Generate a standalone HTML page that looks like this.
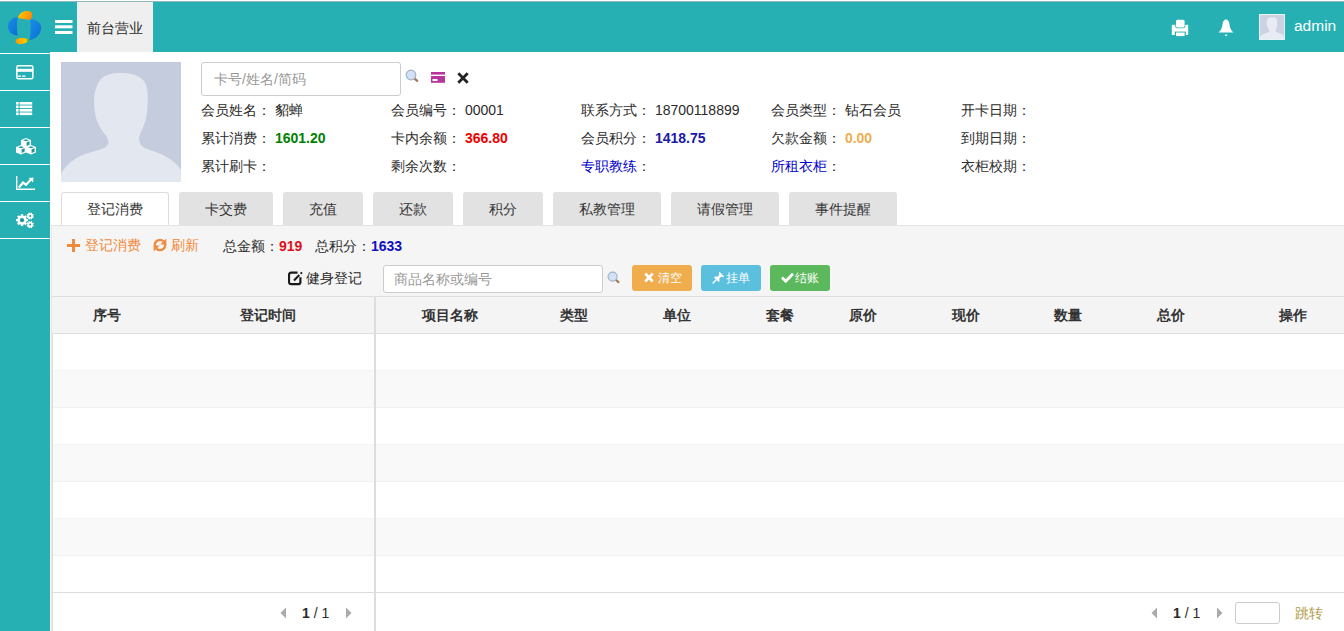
<!DOCTYPE html>
<html><head><meta charset="utf-8">
<style>
*{box-sizing:border-box;margin:0;padding:0}
html,body{width:1344px;height:631px;overflow:hidden;background:#fff;font-family:"Liberation Sans",sans-serif;font-size:14px;color:#333}
.a{position:absolute}
#hdr{left:0;top:1px;width:1344px;height:51px;background:#26b0b3;border-top:1px solid #8fb9b9}
#side{left:0;top:52px;width:50px;height:579px;background:#26b0b3}
.si{position:absolute;left:0;width:50px;height:37px;border-top:1px solid #fff}
#tabtop{left:77px;top:2px;width:76px;height:50px;background:#efefef}
.lbl{position:absolute;white-space:nowrap;font-size:14px;color:#2b2b2b;line-height:16px}
.tab{position:absolute;top:192px;height:33px;background:#e2e2e2;border-radius:3px 3px 0 0;text-align:center;line-height:34px;font-size:14px;color:#333}
.tab.act{background:#fff;border:1px solid #ddd;border-bottom:none;line-height:33px}
.th{position:absolute;top:297px;font-weight:bold;font-size:14px;line-height:37px;color:#333;white-space:nowrap}
.btn{position:absolute;top:265px;width:60px;height:26px;border-radius:3px;color:#fff;font-size:13px;line-height:26px;text-align:center}
</style></head><body>
<div id="hdr" class="a"></div>
<div class="a" style="left:0;top:52px;width:50px;height:1px;background:#229fa2"></div>
<svg class="a" style="left:4px;top:6px" width="42" height="42" viewBox="0 0 42 42">
  <defs>
    <linearGradient id="lf" x1="0" y1="0" x2="1" y2="0.3"><stop offset="0" stop-color="#ffd400"/><stop offset="1" stop-color="#ff8a00"/></linearGradient>
    <linearGradient id="lf2" x1="0" y1="0" x2="1" y2="0"><stop offset="0" stop-color="#ff9a00"/><stop offset="0.7" stop-color="#ffc800"/><stop offset="1" stop-color="#2c9a3a"/></linearGradient>
    <linearGradient id="bl" x1="0" y1="0" x2="1" y2="1"><stop offset="0" stop-color="#1a8fe8"/><stop offset="1" stop-color="#0a6fd0"/></linearGradient>
  </defs>
  <path d="M13.6 11 C7.5 12 4 15.5 4 20.5 C4 25.5 7.5 29 13.6 29.6 C12.6 24 12.6 16.5 13.6 11 Z" fill="url(#bl)"/>
  <path d="M26 13 C33 14 37.2 17 37.2 21.5 C37.2 28 32.5 33 25.3 34.2 C27 27.5 27 19.5 26 13 Z" fill="url(#bl)"/>
  <path d="M14 11.8 C15 7.5 19 5 23 5 C26 5 28.2 6 28.2 8.6 C28.2 11 27.3 13.3 26.3 13.8 C22 13.6 17 12.8 14 11.8 Z" fill="url(#lf)"/>
  <path d="M11.7 34.6 C12 32.6 15 32 18 32 C21 32 24 32.8 25.9 33.8 C24 36.6 20 38.2 16 38.2 C13 38.2 11.5 36.6 11.7 34.6 Z" fill="url(#lf2)"/>
</svg>
<svg class="a" style="left:55px;top:20px" width="18" height="14" viewBox="0 0 18 14" fill="#fff">
  <rect x="0" y="0" width="17.5" height="3"/><rect x="0" y="5.3" width="17.5" height="3"/><rect x="0" y="11" width="17.5" height="3"/>
</svg>
<div id="tabtop" class="a"></div>
<div class="lbl" style="left:87px;top:20px">前台营业</div>
<div id="side" class="a">
  <div class="si" style="top:1px"></div>
  <div class="si" style="top:38px"></div>
  <div class="si" style="top:75px"></div>
  <div class="si" style="top:112px"></div>
  <div class="si" style="top:149px"></div>
  <div class="si" style="top:186px"></div>
</div>
<!-- sidebar icons -->
<svg class="a" style="left:16px;top:65px" width="18" height="15" viewBox="0 0 18 15">
  <rect x="0.8" y="0.8" width="16" height="13" rx="1.5" fill="none" stroke="#fff" stroke-width="1.6"/>
  <rect x="1" y="3.8" width="16" height="3" fill="#fff"/>
  <rect x="2" y="10.5" width="3" height="1.3" fill="#fff"/><rect x="6" y="10.5" width="3.5" height="1.3" fill="#fff"/>
</svg>
<svg class="a" style="left:16px;top:102px" width="17" height="14" viewBox="0 0 17 14" fill="#fff">
  <rect x="0" y="0" width="2.6" height="2.6"/><rect x="3.6" y="0" width="12.6" height="2.6"/>
  <rect x="0" y="3.5" width="2.6" height="2.6"/><rect x="3.6" y="3.5" width="12.6" height="2.6"/>
  <rect x="0" y="7" width="2.6" height="2.6"/><rect x="3.6" y="7" width="12.6" height="2.6"/>
  <rect x="0" y="10.5" width="2.6" height="2.6"/><rect x="3.6" y="10.5" width="12.6" height="2.6"/>
</svg>
<svg class="a" style="left:16px;top:138px" width="21" height="17" viewBox="0 0 21 17">
  <g fill="#fff">
    <path d="M10 0 L15 2 L15 7.5 L10 9.5 L5 7.5 L5 2 Z"/>
    <path d="M5 7 L10 9 L10 14.5 L5 16.5 L0 14.5 L0 9 Z"/>
    <path d="M15 7 L20 9 L20 14.5 L15 16.5 L10 14.5 L10 9 Z"/>
  </g>
  <g fill="#229a98">
    <path d="M7 2.2 L10 1.2 L13 2.2 L10 3.3 Z"/><path d="M10.6 4.3 L13.6 3.2 L13.6 6.8 L10.6 8 Z"/>
    <path d="M2 9.2 L5 8.2 L8 9.2 L5 10.3 Z"/><path d="M5.6 11.3 L8.6 10.2 L8.6 13.8 L5.6 15 Z"/>
    <path d="M12 9.2 L15 8.2 L18 9.2 L15 10.3 Z"/><path d="M15.6 11.3 L18.6 10.2 L18.6 13.8 L15.6 15 Z"/>
  </g>
</svg>
<svg class="a" style="left:16px;top:176px" width="20" height="15" viewBox="0 0 20 15">
  <path d="M0.7 0 V13.3 H19" fill="none" stroke="#fff" stroke-width="1.4"/>
  <path d="M3 11.5 L7 6.5 L10 8.7 L15 3.6" fill="none" stroke="#fff" stroke-width="2.2"/>
  <path d="M12.5 2 L17.5 1.5 L17 6.5 Z" fill="#fff"/>
</svg>
<svg class="a" style="left:15px;top:212px" width="21" height="17" viewBox="0 0 21 17">
  <g fill="#fff">
    <circle cx="7" cy="8.2" r="4.7"/>
    <path d="M7.00 8.20 L12.90 8.20 M7.00 8.20 L11.17 12.37 M7.00 8.20 L7.00 14.10 M7.00 8.20 L2.83 12.37 M7.00 8.20 L1.10 8.20 M7.00 8.20 L2.83 4.03 M7.00 8.20 L7.00 2.30 M7.00 8.20 L11.17 4.03 " stroke="#fff" stroke-width="2.3"/>
    <circle cx="15.2" cy="4" r="2.7"/>
    <path d="M15.20 4.00 L18.53 5.38 M15.20 4.00 L16.58 7.33 M15.20 4.00 L13.82 7.33 M15.20 4.00 L11.87 5.38 M15.20 4.00 L11.87 2.62 M15.20 4.00 L13.82 0.67 M15.20 4.00 L16.58 0.67 M15.20 4.00 L18.53 2.62 " stroke="#fff" stroke-width="1.4"/>
    <circle cx="15.2" cy="12.6" r="2.7"/>
    <path d="M15.20 12.60 L18.53 13.98 M15.20 12.60 L16.58 15.93 M15.20 12.60 L13.82 15.93 M15.20 12.60 L11.87 13.98 M15.20 12.60 L11.87 11.22 M15.20 12.60 L13.82 9.27 M15.20 12.60 L16.58 9.27 M15.20 12.60 L18.53 11.22 " stroke="#fff" stroke-width="1.4"/>
  </g>
  <circle cx="7" cy="8.2" r="2.1" fill="#229a98"/>
  <circle cx="15.2" cy="4" r="1" fill="#229a98"/>
  <circle cx="15.2" cy="12.6" r="1" fill="#229a98"/>
</svg>
<!-- header right -->
<svg class="a" style="left:1171px;top:19px" width="18" height="18" viewBox="0 0 18 18" fill="#fff">
  <path d="M0.8 5.8 H17.2 V16 H0.8 Z"/>
  <rect x="4.3" y="0" width="10" height="9.3" rx="1.8" fill="#26b0b3"/>
  <rect x="5" y="0.7" width="8.6" height="7.9" rx="1.5"/>
  <rect x="3.8" y="12.6" width="11" height="5.4" fill="#26b0b3"/>
  <rect x="5" y="13.5" width="8.6" height="3.6"/>
</svg>
<svg class="a" style="left:1218px;top:19px" width="16" height="18" viewBox="0 0 16 18" fill="#fff">
  <path d="M8 0.6 C6.2 0.6 4.9 2.3 4.6 4.8 C4.1 9 3.2 11.3 0.6 13.4 H15.4 C12.8 11.3 11.9 9 11.4 4.8 C11.1 2.3 9.8 0.6 8 0.6 Z"/>
  <rect x="6.9" y="15.6" width="2.4" height="1.2"/>
</svg>
<div class="a" style="left:1259px;top:14px;width:26px;height:26px;background:#dfe3ee;border:1px solid #e6f2f4;overflow:hidden">
<svg width="24" height="24" viewBox="0 0 120 120" style="display:block"><rect width="120" height="120" fill="#cdd2e2"/><path d="M0,120 L0,112 C6,100 18,93 34,89 C42,87 47,85 47.5,80 L46,75 C40,68 35,60 34,50 C32,38 33,25 40,17 C45,12 52,11 60,11 C70,11 78,13 83,19 C88,26 87,40 86,50 C85,60 81,68 78,75 L78.5,80 C80,85 85,87 92,89 C105,93 115,100 120,108 L120,120 Z" fill="#e8ebf3"/></svg>
</div>
<!-- photo -->
<svg class="a" style="left:61px;top:62px" width="120" height="120" viewBox="0 0 120 120"><rect width="120" height="120" fill="#c5ccdd"/><path d="M0,120 L0,112 C6,100 18,93 34,89 C42,87 47,85 47.5,80 L46,75 C40,68 35,60 34,50 C32,38 33,25 40,17 C45,12 52,11 60,11 C70,11 78,13 83,19 C88,26 87,40 86,50 C85,60 81,68 78,75 L78.5,80 C80,85 85,87 92,89 C105,93 115,100 120,108 L120,120 Z" fill="#e3e7f0"/></svg>

<!-- search input -->
<div class="a" style="left:201px;top:62px;width:200px;height:34px;border:1px solid #ccc;border-radius:3px"></div>
<div class="lbl" style="left:214px;top:71px;color:#999">卡号/姓名/简码</div>

<svg class="a" style="left:404px;top:68px" width="18" height="18" viewBox="0 0 18 18">
  <path d="M10.3 10.3 L13.2 12.8" stroke="#a87850" stroke-width="2.3" stroke-linecap="round"/>
  <circle cx="7" cy="7" r="4.8" fill="#d3e0f5" stroke="#9fb2c8" stroke-width="1.2"/>
</svg>
<svg class="a" style="left:431px;top:72px" width="15" height="11" viewBox="0 0 15 11">
  <rect x="0" y="0" width="14" height="2.6" fill="#b8369c"/>
  <rect x="0" y="4" width="14" height="6.8" fill="#b8369c"/>
  <rect x="1.5" y="7" width="5" height="2" fill="#fff"/>
</svg>
<svg class="a" style="left:457px;top:72px" width="12" height="12" viewBox="0 0 12 12">
  <path d="M1.3 1.3 L10.7 10.7 M10.7 1.3 L1.3 10.7" stroke="#222" stroke-width="2.8"/>
</svg>
<!-- info rows -->
<div class="lbl" style="left:201px;top:102px">会员姓名： 貂蝉</div>
<div class="lbl" style="left:391px;top:102px">会员编号： 00001</div>
<div class="lbl" style="left:581px;top:102px">联系方式： 18700118899</div>
<div class="lbl" style="left:771px;top:102px">会员类型： 钻石会员</div>
<div class="lbl" style="left:961px;top:102px">开卡日期：</div>

<div class="lbl" style="left:201px;top:130px">累计消费： <b style="color:#008000">1601.20</b></div>
<div class="lbl" style="left:391px;top:130px">卡内余额： <b style="color:#e00">366.80</b></div>
<div class="lbl" style="left:581px;top:130px">会员积分： <b style="color:#1a1aa6">1418.75</b></div>
<div class="lbl" style="left:771px;top:130px">欠款金额： <b style="color:#f0ad4e">0.00</b></div>
<div class="lbl" style="left:961px;top:130px">到期日期：</div>

<div class="lbl" style="left:201px;top:158px">累计刷卡：</div>
<div class="lbl" style="left:391px;top:158px">剩余次数：</div>
<div class="lbl" style="left:581px;top:158px"><span style="color:#00c">专职教练</span>：</div>
<div class="lbl" style="left:771px;top:158px"><span style="color:#00c">所租衣柜</span>：</div>
<div class="lbl" style="left:961px;top:158px">衣柜校期：</div>

<!-- panel -->
<div class="a" style="left:51px;top:225px;width:1293px;height:406px;background:#f5f5f5;border-top:1px solid #e3e3e3;border-left:1px solid #e8e8e8"></div>

<!-- tabs -->
<div class="tab act" style="left:61px;width:108px">登记消费</div>
<div class="tab" style="left:179px;width:94px">卡交费</div>
<div class="tab" style="left:283px;width:80px">充值</div>
<div class="tab" style="left:373px;width:80px">还款</div>
<div class="tab" style="left:463px;width:80px">积分</div>
<div class="tab" style="left:553px;width:108px">私教管理</div>
<div class="tab" style="left:671px;width:108px">请假管理</div>
<div class="tab" style="left:789px;width:108px">事件提醒</div>

<!-- toolbar -->
<svg class="a" style="left:67px;top:239px" width="13" height="13" viewBox="0 0 13 13"><path d="M6.5 0 V13 M0 6.5 H13" stroke="#f08a3c" stroke-width="3"/></svg>
<div class="lbl" style="left:85px;top:237px;color:#f08a3c">登记消费</div>
<svg class="a" style="left:153px;top:238px" width="14" height="14" viewBox="0 0 14 14">
  <path d="M1.9 8.2 A5.2 5.2 0 0 1 10.6 3.4" fill="none" stroke="#f08a3c" stroke-width="2.3"/>
  <path d="M13.3 0.6 V6.6 H7.3 Z" fill="#f08a3c"/>
  <path d="M12.1 5.8 A5.2 5.2 0 0 1 3.4 10.6" fill="none" stroke="#f08a3c" stroke-width="2.3"/>
  <path d="M0.7 13.4 V7.4 H6.7 Z" fill="#f08a3c"/>
</svg>
<div class="lbl" style="left:171px;top:237px;color:#f08a3c">刷新</div>
<div class="lbl" style="left:223px;top:238px">总金额：<b style="color:#e0101a">919</b></div>
<div class="lbl" style="left:315px;top:238px">总积分：<b style="color:#1010c0">1633</b></div>
<svg class="a" style="left:288px;top:271px" width="15" height="15" viewBox="0 0 15 15">
  <path d="M9.5 1.6 H3.3 Q1 1.6 1 3.9 V10.9 Q1 13.2 3.3 13.2 H10.1 Q12.4 13.2 12.4 10.9 V6.2" fill="none" stroke="#1a1a1a" stroke-width="2.2"/>
  <path d="M6 9.5 L11.3 4.1" stroke="#1a1a1a" stroke-width="2.1"/>
  <circle cx="13.3" cy="2.1" r="1.1" fill="#1a1a1a"/>
</svg>
<div class="lbl" style="left:306px;top:270px">健身登记</div>
<div class="a" style="left:383px;top:265px;width:220px;height:28px;border:1px solid #ccc;border-radius:3px;background:#fff"></div>
<div class="lbl" style="left:394px;top:271px;color:#999">商品名称或编号</div>
<svg class="a" style="left:606px;top:270px" width="17" height="17" viewBox="0 0 18 18">
  <path d="M10.3 10.3 L13.2 12.8" stroke="#a87850" stroke-width="2.3" stroke-linecap="round"/>
  <circle cx="7" cy="7" r="4.8" fill="#d3e0f5" stroke="#9fb2c8" stroke-width="1.2"/>
</svg>
<div class="btn" style="left:632px;background:#f0ad4e"></div>
<svg class="a" style="left:644px;top:272px" width="10" height="11" viewBox="0 0 10 11"><path d="M1.3 1.5 L8.7 9.5 M8.7 1.5 L1.3 9.5" stroke="#fff" stroke-width="2.6"/></svg>
<div class="lbl" style="left:658px;top:270px;color:#fff;font-size:12px">清空</div>
<div class="btn" style="left:701px;background:#5bc0de"></div>
<svg class="a" style="left:712px;top:271px" width="13" height="13" viewBox="0 0 13 13">
  <path d="M7.5 0.8 L12.2 5.5 L10.8 6.2 L9.3 5.6 L7.3 7.6 L7.6 10 L6.6 11 L2 6.4 L3 5.4 L5.4 5.7 L7.4 3.7 L6.8 2.2 Z" fill="#fff"/>
  <path d="M4.2 8.8 L0.6 12.4" stroke="#fff" stroke-width="1.4"/>
</svg>
<div class="lbl" style="left:726px;top:270px;color:#fff;font-size:12px">挂单</div>
<div class="btn" style="left:770px;background:#5cb85c"></div>
<svg class="a" style="left:781px;top:272px" width="13" height="11" viewBox="0 0 13 11"><path d="M1 5.5 L4.8 9.2 L12 1.8" fill="none" stroke="#fff" stroke-width="2.8"/></svg>
<div class="lbl" style="left:795px;top:270px;color:#fff;font-size:12px">结账</div>

<!-- table -->
<div class="a" style="left:52px;top:296px;width:1292px;height:335px;background:#fff;border-left:1px solid #ddd"></div>
<div class="a" style="left:52px;top:296px;width:1292px;height:38px;background:#f4f4f4;border-top:1px solid #ddd;border-bottom:1px solid #ddd"></div>
<div class="a" style="left:53px;top:370px;width:1291px;height:38px;background:#f9f9f9;border-top:1px solid #f4f4f4;border-bottom:1px solid #f1f1f1"></div>
<div class="a" style="left:53px;top:444px;width:1291px;height:38px;background:#f9f9f9;border-top:1px solid #f4f4f4;border-bottom:1px solid #f1f1f1"></div>
<div class="a" style="left:53px;top:518px;width:1291px;height:38px;background:#f9f9f9;border-top:1px solid #f4f4f4;border-bottom:1px solid #f1f1f1"></div>
<div class="a" style="left:52px;top:592px;width:1292px;height:1px;background:#ddd"></div>
<div class="a" style="left:374px;top:296px;width:2px;height:335px;background:#ddd"></div>

<div class="th" style="left:93px">序号</div>
<div class="th" style="left:240px">登记时间</div>
<div class="th" style="left:422px">项目名称</div>
<div class="th" style="left:560px">类型</div>
<div class="th" style="left:663px">单位</div>
<div class="th" style="left:766px">套餐</div>
<div class="th" style="left:849px">原价</div>
<div class="th" style="left:952px">现价</div>
<div class="th" style="left:1054px">数量</div>
<div class="th" style="left:1157px">总价</div>
<div class="th" style="left:1279px">操作</div>

<!-- footer -->
<svg class="a" style="left:280px;top:607px" width="7" height="12" viewBox="0 0 7 12"><path d="M6 0.5 V11.5 L0.5 6 Z" fill="#aaa"/></svg>
<svg class="a" style="left:345px;top:607px" width="7" height="12" viewBox="0 0 7 12"><path d="M1 0.5 V11.5 L6.5 6 Z" fill="#aaa"/></svg>
<svg class="a" style="left:1151px;top:607px" width="7" height="12" viewBox="0 0 7 12"><path d="M6 0.5 V11.5 L0.5 6 Z" fill="#aaa"/></svg>
<svg class="a" style="left:1216px;top:607px" width="7" height="12" viewBox="0 0 7 12"><path d="M1 0.5 V11.5 L6.5 6 Z" fill="#aaa"/></svg>
<div class="lbl" style="left:302px;top:605px"><b>1</b> / 1</div>
<div class="lbl" style="left:1173px;top:605px"><b>1</b> / 1</div>
<div class="a" style="left:1235px;top:602px;width:45px;height:22px;border:1px solid #ccc;border-radius:3px"></div>
<div class="lbl" style="left:1295px;top:605px;color:#b39c48">跳转</div>

<div class="lbl" style="left:1294px;top:17px;color:#fff;font-size:15.5px;line-height:18px">admin</div>
</body></html>
